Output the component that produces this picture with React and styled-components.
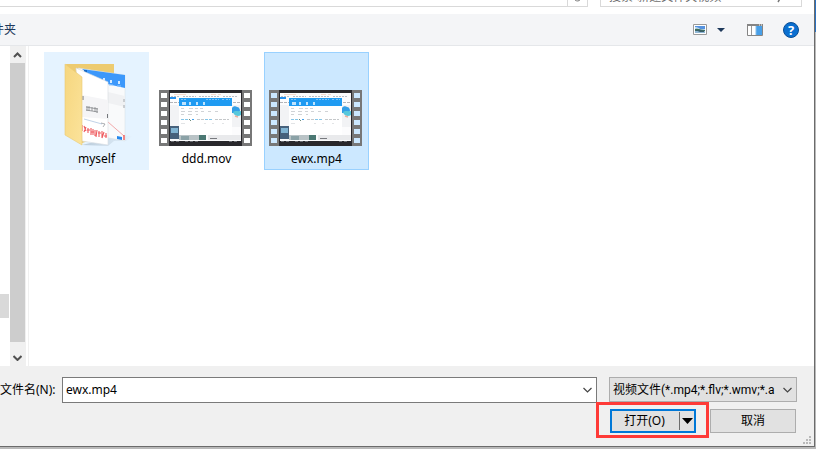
import React from 'react'
import styled, { createGlobalStyle, css } from 'styled-components'

const GlobalStyle = createGlobalStyle`
  * {
    box-sizing: border-box;
  }

  body {
    margin: 0;
    background: #c0c0c0;
    color: #000;
    font: 12px/16px 'Noto Sans', 'Noto Sans CJK SC', sans-serif;
  }

  button,
  input,
  select {
    font: inherit;
    color: inherit;
    border-radius: 0;
    margin: 0;
  }
`

const Desktop = styled.div`
  display: flex;
  min-height: 100vh;
  padding: 0 1px 2px 0;
  background: linear-gradient(#2b71c1 32px, #b9b9b9 32px);
`

const Dialog = styled.main`
  flex: 1;
  display: flex;
  flex-direction: column;
  min-width: 0;
  background: #fff;
  border: solid #6b6b6b;
  border-width: 0 1px 1px 0;
`

const AddressBar = styled.div`
  display: flex;
  align-items: flex-end;
  height: 14px;
  padding: 0 12px 7px 0;
  overflow: hidden;
`

const Address = styled.div`
  flex: 1;
  display: flex;
  justify-content: flex-end;
  height: 20px;
  border: 1px solid #d9d9d9;
  border-left: 0;
  margin-right: 12px;
`

const Refresh = styled.button`
  display: flex;
  align-items: center;
  justify-content: center;
  width: 20px;
  padding: 0;
  border: 0;
  border-left: 1px solid #d9d9d9;
  background: none;
`

const SearchBox = styled.div`
  display: flex;
  align-items: center;
  width: 202px;
  height: 20px;
  padding: 0 14px 0 8px;
  border: 1px solid #d9d9d9;
`

const Search = styled.input`
  flex: 1;
  min-width: 0;
  padding: 0;
  border: 0;
  outline: 0;

  &::placeholder {
    color: #6d6d6d;
    opacity: 1;
  }
`

const Toolbar = styled.header`
  display: flex;
  align-items: center;
  height: 32px;
  padding-right: 15px;
  background: #f4f5f7;
  border-bottom: 1px solid #e5e7ea;
`

const NewFolder = styled.button`
  margin: 0 auto 0 -44px;
  padding: 0;
  border: 0;
  background: none;
  color: #1e395b;
`

const ToolButton = styled.button`
  display: flex;
  padding: 0;
  border: 0;
  background: none;
  margin-left: ${p => p.$gap}px;
`

const Body = styled.div`
  flex: 1;
  display: flex;
  min-height: 0;
`

const NavPane = styled.nav`
  width: 10px;
  padding: 248px 1px 0 0;
`

const NavItem = styled.div`
  height: 24px;
  background: #d9d9d9;
`

const Scrollbar = styled.div`
  display: flex;
  flex-direction: column;
  width: 16px;
  background: #f0f0f0;
`

const ScrollArrow = styled.button`
  display: flex;
  align-items: center;
  justify-content: center;
  width: 15px;
  height: 17px;
  padding: 0;
  border: 0;
  background: none;
`

const Thumb = styled.div`
  flex: 1;
  width: 15px;
  margin-bottom: 7px;
  background: #cdcdcd;
`

const Files = styled.section`
  flex: 1;
  display: flex;
  align-items: flex-start;
  gap: 5px;
  margin-left: 2px;
  padding: 6px 15px;
  border-left: 1px solid #f0f0f0;
`

const tileStates = {
  hover: css`
    background: #e5f3ff;
    border-color: #e5f3ff;
  `,
  selected: css`
    background: #cce8ff;
    border-color: #99d1ff;
  `,
}

const Tile = styled.button`
  display: flex;
  flex-direction: column;
  align-items: center;
  justify-content: flex-end;
  width: 105px;
  height: 118px;
  padding: 0 0 1px;
  border: 1px solid transparent;
  background: transparent;

  ${p => tileStates[p.$state]}
`

const FileName = styled.span`
  line-height: 18px;
  margin-top: 4px;
`

const Footer = styled.form`
  display: grid;
  grid-template-columns: 57px 1fr 188px;
  column-gap: 5px;
  row-gap: 6px;
  height: 80px;
  align-items: start;
  align-content: start;
  position: relative;
  padding: 11px 17px 0 0;
  background: #f0f0f0;
`

const NameLabel = styled.label`
  line-height: 26px;
  white-space: nowrap;
`

const Combo = styled.div`
  display: flex;
  align-items: center;
  height: 26px;
  margin-right: 7px;
  padding-right: 4px;
  background: #fff;
  border: 1px solid #7a7a7a;
`

const NameInput = styled.input`
  flex: 1;
  min-width: 0;
  padding: 0 3px;
  border: 0;
  outline: 0;
  background: none;
`

const ComboArrow = styled.button`
  display: flex;
  padding: 0;
  border: 0;
  background: none;
`

const TypeField = styled.div`
  display: grid;
  align-items: center;
  height: 25px;
  background: #e1e1e1;
  border: 1px solid #adadad;

  > * {
    grid-area: 1 / 1;
  }

  > svg {
    justify-self: end;
    margin-right: 4px;
    pointer-events: none;
  }
`

const TypeSelect = styled.select`
  appearance: none;
  width: 100%;
  height: 23px;
  padding: 0 12px 0 3px;
  border: 0;
  background: none;
  font-family: Roboto, 'Noto Sans CJK SC', sans-serif;
`

const Actions = styled.div`
  grid-column: 1 / -1;
  display: flex;
  justify-content: flex-end;
  gap: 14px;
  padding-right: 1px;
`

const OpenGroup = styled.div`
  display: flex;
  position: relative;
  width: 86px;
  height: 24px;
  background: #e1e1e1;
  border: 2px solid #0078d7;
`

const Highlight = styled.div`
  position: absolute;
  inset: -9px -15px -7px -16px;
  border: 3px solid #fe3a37;
  pointer-events: none;
`

const OpenButton = styled.button`
  flex: 1;
  padding: 0 2px 0 0;
  border: 0;
  background: none;
`

const OpenMenu = styled.button`
  display: flex;
  align-items: center;
  justify-content: center;
  width: 15px;
  padding: 0;
  margin: 1px 0;
  border: 0;
  border-left: 1px solid #6d6d6d;
  background: none;
`

const Cancel = styled.button`
  width: 86px;
  height: 24px;
  padding: 0;
  background: #e1e1e1;
  border: 1px solid #adadad;
`

const Grip = styled.svg`
  position: absolute;
  right: 3px;
  bottom: 2px;
`

const Chevron = ({ up, bold }) => (
  <svg width="9" height="6" viewBox="0 0 9 6" fill="none">
    <path
      d={up ? 'M1 5L4.500 1.500L8 5' : 'M.5 1L4.500 5L8.500 1'}
      stroke={bold ? '#505050' : '#444'}
      strokeWidth={bold ? 2 : 1.2}
    />
  </svg>
)

const Triangle = ({ width, height, color }) => (
  <svg width={width} height={height} viewBox="0 0 10 6" preserveAspectRatio="none">
    <path d="M0 0H10L5 6Z" fill={color} />
  </svg>
)

const FolderIcon = () => (
  <svg width="73" height="86" viewBox="-4 -3 73 86">
    <defs>
      <linearGradient id="folder" x1="0" y1="0" x2="1" y2="1">
        <stop offset="0" stopColor="#f6d67e" />
        <stop offset="1" stopColor="#fbe39b" />
      </linearGradient>
      <linearGradient id="shade" x1="0" x2="1">
        <stop offset="0" stopColor="#9db0c0" stopOpacity=".6" />
        <stop offset="1" stopColor="#9db0c0" stopOpacity="0" />
      </linearGradient>
    </defs>
    <path d="M18 82L44 83L50 78L62 78L69 73L58 72Z" fill="url(#shade)" />
    <path d="M2 1H50V70L18 80Z" fill="#edcb70" />
    <path d="M14 5L61 12V78L40 74Z" fill="#f9fafb" stroke="#d5dce2" strokeWidth=".5" />
    <path d="M18 6L61 12V25L34 19Z" fill="#3c98fb" />
    <path d="M20 7L23 7V10L20 9Z" fill="#1769c4" />
    <path d="M39 15h2v3h-2zM46 17h2v3h-2zM54 18h2v3h-2z" fill="#d5eaff" />
    <path d="M38 20h4M45 22h4M53 23h4" stroke="#91c6fc" />
    <path d="M44 29L61 33V44L44 40Z" fill="#f0f1f3" />
    <path d="M60 36v3M60 42v3" stroke="#a3a8ad" />
    <path d="M44 59L60 73" stroke="#f2a9aa" />
    <path d="M53 73l5 1v3l-5-1z" fill="#2587ec" />
    <path d="M60 72v5" stroke="#ef6262" strokeWidth="1.500" />
    <path d="M12 5L44 19V82L18 78Z" fill="#fff" stroke="#d7dce0" strokeWidth=".6" />
    <path d="M18 32L44 37V56L18 54Z" fill="#f5f5f7" />
    <path d="M19 33v4M43.500 51v4" fill="none" stroke="#74777b" />
    <path
      d="M22 44l12 2M22 47l12 2M23 43v5M25 43v5M28 44v4M31 44v5M33 45v5"
      stroke="#85888c"
      strokeWidth=".8"
    />
    <path d="M20 56L38 61" stroke="#a5bfdd" strokeWidth=".7" />
    <path d="M37 60l4 1l-2 3" fill="none" stroke="#8a8e92" strokeWidth=".7" />
    <path
      d="M18 62v6M20 63l2 5M22 64l-2 5M24 65v5M23 67h3M27 65v7M29 66v6M27 69h3M31 67v6M33 67l-1 7M35 68v6M34 70h3M38 68v7M40 69l-2 6M42 70v5M40 73h3"
      stroke="#ee5a5e"
      strokeWidth="1.100"
      fill="none"
    />
    <path d="M1 1L18 14V82L1 72Z" fill="url(#folder)" stroke="#e9ca72" strokeWidth=".6" />
  </svg>
)

const holes = [3, 12, 21, 30, 39, 48]

const VideoIcon = () => (
  <svg width="95" height="56" viewBox="0 0 95 56">
    <path
      fillRule="evenodd"
      fill="#777"
      d={`M0 0H93V56H0Z${holes.map(y => `M2 ${y}h6v5h-6zM85 ${y}h6v5h-6z`).join('')}`}
    />
    <path d="M10 0H83V56H10Z" fill="#29282c" />
    <path d="M11 3H82V51H11Z" fill="#fcfcfd" />
    <path d="M15 4.500h12M52 4.500h5M59 4.500h3" stroke="#f5dcd0" />
    <path d="M12 6.500h8M24 6.500h13M40 6.500h20M64 6.500h14" stroke="#b9c0c9" strokeDasharray="2 1" />
    <path d="M11 7h6v2h-6z" fill="#2690ed" />
    <path d="M11 12.500h9M74 12.500h8" stroke="#b3b5b9" strokeDasharray="3 1" />
    <path d="M11 15H82V37H11Z" fill="#f2f3f5" />
    <path d="M11 36h9v13h-9z" fill="#46617c" />
    <path d="M12 38h7v5h-7z" fill="#80b3d2" />
    <path d="M20 45h27v5H20z" fill="#b9c3c6" />
    <path d="M22 46h8v4h-8z" fill="#8ba2a7" />
    <path d="M40 45h7v5h-7z" fill="#4b7873" />
    <path d="M49 45h33v5H49z" fill="#e9eaec" />
    <path d="M51 48.500h7" stroke="#77797e" />
    <path d="M73 18c1-2 4-2 5-1c2 0 3 2 3 4l-2 2h-6z" fill="#329ee7" />
    <path d="M74 22c3-2 5 0 8-1v4c-3 2-7 1-8-3z" fill="#57c8dc" />
    <path d="M76 26l3 1" stroke="#e9b0a0" strokeWidth="1.500" />
    <path d="M20 8H73V45H20Z" fill="#fff" />
    <path d="M20 8H73V16H20Z" fill="#1f9bf2" />
    <path d="M22 9.500h6M47 9.500h13M63 9.500h2M67 9.500h4" stroke="#7cc4f8" strokeDasharray="2 1" />
    <path d="M23 12h4v3h-4zM30 12h2v3h-2zM37 12h2v3h-2zM44 12h2v3h-2z" fill="#bfe3fd" />
    <path
      d="M22 18.500h3M30 18.500h4M36 18.500h3M41 18.500h3M22 21.500h4M29 21.500h4M36 21.500h3M42 21.500h3M49 21.500h3M56 21.500h3M22 24.500h3M29 24.500h4M37 24.500h2"
      stroke="#d0d3d6"
    />
    <path d="M22 29.500h8M46 29.500h7" stroke="#84c6e9" strokeDasharray="3 1" />
    <path d="M38 29.500h7M56 29.500h14" stroke="#c5c8ca" strokeDasharray="3 1" />
    <path d="M33 29h2v1h-2z" fill="#3a9ff0" />
    <path d="M30 29l2 2" stroke="#6f8b7b" />
    <path d="M22 33.500h4M45 33.500h2M53 33.500h2M63 33.500h2" stroke="#e2e4e6" />
    <path d="M12 51.500h10M26 51.500h15M70 51.500h9" stroke="#6c6d72" strokeDasharray="3 2" />
  </svg>
)

const ViewIcon = () => (
  <svg width="14" height="11" viewBox="0 0 14 11">
    <path d="M.5.5h13v10H.5z" fill="#fff" stroke="#9a9a9a" />
    <path d="M2 2h10v3H2z" fill="#5592df" />
    <path d="M2 3c3 0 4 1 5 2h5v1H2z" fill="#c8e2f5" />
    <path d="M2 5c4-1 6 1 10 1v1H2z" fill="#3e6f5e" />
    <path d="M2 7h10v2H2z" fill="#8fb7d6" />
    <path d="M2 6h5l4 1v1H7z" fill="#3b5f69" />
  </svg>
)

const PaneIcon = () => (
  <svg width="16" height="12" viewBox="0 0 16 12">
    <path d="M.5.5h15v11H.5z" fill="#fff" stroke="#858585" />
    <path d="M0 0h16v2H0z" fill="#858585" />
    <path d="M12 1h1M14 1h1" stroke="#fff" />
    <path d="M4.500 2v9" stroke="#999" />
    <path d="M9 2h6v9H9z" fill="#479fe8" />
    <path d="M9 2v9" stroke="#85bde9" />
  </svg>
)

const HelpBadge = styled.span`
  display: grid;
  place-items: center;
  width: 16px;
  height: 16px;
  border: 1px solid #0a4d94;
  border-radius: 50%;
  background: #0a6fd0;
  color: #fff;
  font-size: 13px;
  font-weight: 700;
  line-height: 14px;
`

const files = [
  { name: 'myself', icon: FolderIcon, state: 'hover' },
  { name: 'ddd.mov', icon: VideoIcon },
  { name: 'ewx.mp4', icon: VideoIcon, state: 'selected' },
]

const App = () => (
  <>
    <GlobalStyle />
    <Desktop>
      <Dialog>
        <AddressBar>
          <Address>
            <Refresh aria-label="刷新">
              <svg width="9" height="9" viewBox="0 0 9 9" fill="none" stroke="#777">
                <path d="M7 2A3.500 3.500 0 1 0 8 5M7 0v3H4" />
              </svg>
            </Refresh>
          </Address>
          <SearchBox>
            <Search aria-label="搜索" placeholder="搜索“新建文件夹视频”" />
            <svg width="10" height="12" viewBox="0 0 10 12" fill="none" stroke="#777">
              <circle cx="6" cy="4" r="3" />
              <path d="M4 6L1 11" strokeWidth="1.500" />
            </svg>
          </SearchBox>
        </AddressBar>
        <Toolbar>
          <NewFolder>新建文件夹</NewFolder>
          <ToolButton aria-label="更改视图">
            <ViewIcon />
          </ToolButton>
          <ToolButton $gap={10} aria-label="更多选项">
            <Triangle width={8} height={4} color="#1e395b" />
          </ToolButton>
          <ToolButton $gap={22} aria-label="预览窗格">
            <PaneIcon />
          </ToolButton>
          <ToolButton $gap={20} aria-label="帮助">
            <HelpBadge>?</HelpBadge>
          </ToolButton>
        </Toolbar>
        <Body>
          <NavPane>
            <NavItem />
          </NavPane>
          <Scrollbar>
            <ScrollArrow aria-label="向上">
              <Chevron up bold />
            </ScrollArrow>
            <Thumb />
            <ScrollArrow aria-label="向下">
              <Chevron bold />
            </ScrollArrow>
          </Scrollbar>
          <Files>
            {files.map(({ name, icon: Icon, state }) => (
              <Tile key={name} $state={state}>
                <Icon />
                <FileName>{name}</FileName>
              </Tile>
            ))}
          </Files>
        </Body>
        <Footer onSubmit={e => e.preventDefault()}>
          <NameLabel htmlFor="filename">文件名(N):</NameLabel>
          <Combo>
            <NameInput id="filename" defaultValue="ewx.mp4" />
            <ComboArrow type="button" aria-label="历史记录">
              <Chevron />
            </ComboArrow>
          </Combo>
          <TypeField>
            <TypeSelect aria-label="文件类型">
              <option>视频文件(*.mp4;*.flv;*.wmv;*.a</option>
            </TypeSelect>
            <Chevron />
          </TypeField>
          <Actions>
            <OpenGroup>
              <OpenButton>打开(O)</OpenButton>
              <OpenMenu type="button" aria-label="打开方式">
                <Triangle width={11} height={6} color="#000" />
              </OpenMenu>
              <Highlight />
            </OpenGroup>
            <Cancel type="button">取消</Cancel>
          </Actions>
          <Grip width="8" height="8" viewBox="0 0 8 8">
            <path d="M6 0h2v2H6zM3 3h2v2H3zM6 3h2v2H6zM0 6h2v2H0zM3 6h2v2H3zM6 6h2v2H6z" fill="#b9b9b9" />
          </Grip>
        </Footer>
      </Dialog>
    </Desktop>
  </>
)

export default App
